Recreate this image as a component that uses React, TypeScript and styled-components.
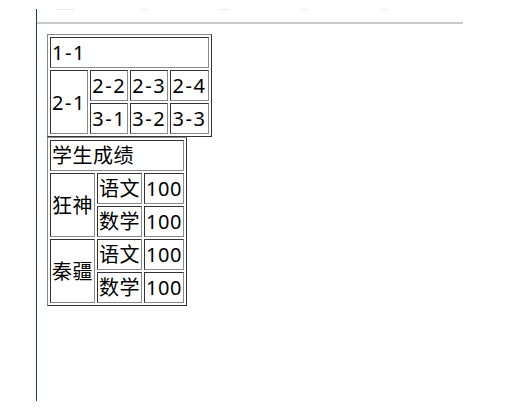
import React from 'react';
import styled, { createGlobalStyle } from 'styled-components';

const GlobalStyle = createGlobalStyle`
  body {
    margin: 0;
    background: #ffffff;
    font-family: "Noto Sans", "Noto Sans CJK SC", sans-serif;
    color: #000000;
  }
`;

const Frame = styled.div`
  margin: 9px 0 0 36px;
  width: 427px;
  height: 392px;
  border-left: 1px solid #2b3a3f;
  box-sizing: border-box;
`;

const TabStrip = styled.div`
  height: 13px;
  position: relative;
`;

// faint leftovers of a cut-off tab row
const TabMark = styled.span<{ $left: number; $width: number }>`
  position: absolute;
  top: 0;
  left: ${p => p.$left}px;
  width: ${p => p.$width}px;
  height: 1px;
  background: #ececf0;
`;

const Rule = styled.div`
  height: 2px;
  background: #c8c8c8;
`;

const Content = styled.div`
  padding: 10px 0 0 10px;
`;

const Table = styled.table<{ $tracking: number }>`
  border-collapse: separate;
  border-spacing: 2px;
  border: 1px solid;
  border-color: #8a8a8a #333333 #333333 #8a8a8a;
  font-size: 20px;

  td {
    letter-spacing: ${p => p.$tracking}px;
  }
`;

const Cell = styled.td`
  padding: 1px;
  border: 1px solid;
  border-color: #333333 #8a8a8a #8a8a8a #333333;
  line-height: 27px;
  white-space: nowrap;
`;

const marks = [
  { left: 20, width: 17 },
  { left: 104, width: 7 },
  { left: 182, width: 11 },
  { left: 264, width: 7 },
  { left: 344, width: 7 },
  { left: 425, width: 1 },
];

const scores = [
  { name: '狂神', rows: [['语文', '100'], ['数学', '100']] },
  { name: '秦疆', rows: [['语文', '100'], ['数学', '100']] },
];

export default function App() {
  return (
    <>
      <GlobalStyle />
      <Frame>
        <TabStrip>
          {marks.map(m => (
            <TabMark key={m.left} $left={m.left} $width={m.width} />
          ))}
        </TabStrip>
        <Rule />
        <Content>
          <Table $tracking={1.6}>
            <tbody>
              <tr>
                <Cell colSpan={4}>1-1</Cell>
              </tr>
              <tr>
                <Cell rowSpan={2}>2-1</Cell>
                <Cell>2-2</Cell>
                <Cell>2-3</Cell>
                <Cell>2-4</Cell>
              </tr>
              <tr>
                <Cell>3-1</Cell>
                <Cell>3-2</Cell>
                <Cell>3-3</Cell>
              </tr>
            </tbody>
          </Table>
          <Table $tracking={0.5}>
            <tbody>
              <tr>
                <Cell colSpan={3}>学生成绩</Cell>
              </tr>
              {scores.map(s =>
                s.rows.map(([subject, score], i) => (
                  <tr key={s.name + subject}>
                    {i === 0 && <Cell rowSpan={s.rows.length}>{s.name}</Cell>}
                    <Cell>{subject}</Cell>
                    <Cell>{score}</Cell>
                  </tr>
                ))
              )}
            </tbody>
          </Table>
        </Content>
      </Frame>
    </>
  );
}
